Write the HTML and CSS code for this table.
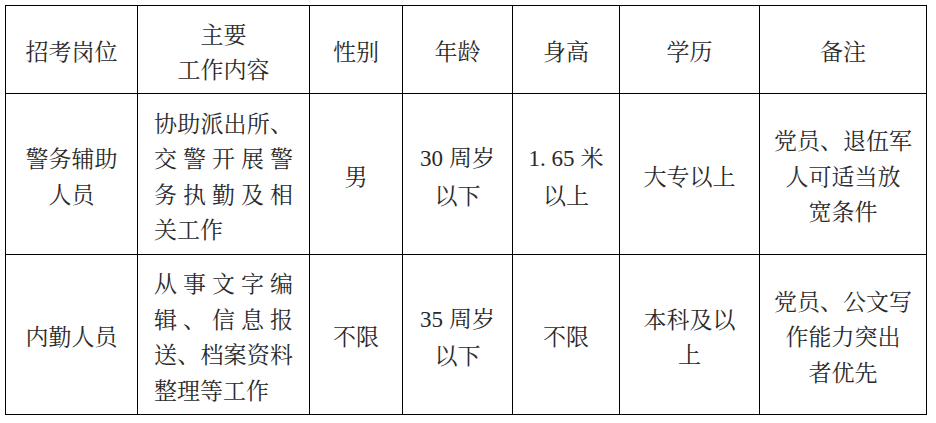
FILE: index.html
```html
<!DOCTYPE html>
<html lang="zh-CN">
<head>
<meta charset="utf-8">
<title>招考岗位</title>
<link rel="stylesheet" href="styles.css">
</head>
<body>
<div class="page">
<table class="jobs">
  <colgroup>
    <col class="c1"><col class="c2"><col class="c3"><col class="c4"><col class="c5"><col class="c6"><col class="c7">
  </colgroup>
  <tr class="head">
    <td>招考岗位</td>
    <td>主要<br>工作内容</td>
    <td>性别</td>
    <td>年龄</td>
    <td>身高</td>
    <td>学历</td>
    <td>备注</td>
  </tr>
  <tr class="r1">
    <td>警务辅助<br>人员</td>
    <td class="just">
      <span class="ln">协助派出所、</span>
      <span class="ln">交警开展警</span>
      <span class="ln">务执勤及相</span>
      <span class="ln last">关工作</span>
    </td>
    <td>男</td>
    <td><span class="num">30</span> 周岁<br>以下</td>
    <td><span class="num">1. 65</span> 米<br>以上</td>
    <td>大专以上</td>
    <td>党员、退伍军<br>人可适当放<br>宽条件</td>
  </tr>
  <tr class="r2">
    <td>内勤人员</td>
    <td class="just">
      <span class="ln">从事文字编</span>
      <span class="ln">辑、信息报</span>
      <span class="ln">送、档案资料</span>
      <span class="ln last">整理等工作</span>
    </td>
    <td>不限</td>
    <td><span class="num">35</span> 周岁<br>以下</td>
    <td>不限</td>
    <td>本科及以<br>上</td>
    <td>党员、公文写<br>作能力突出<br>者优先</td>
  </tr>
</table>
</div>
</body>
</html>
```
FILE: styles.css
```css
html, body {
  margin: 0;
  padding: 0;
  background: #ffffff;
}
.page {
  padding: 5px 0 0 5px;
}
.jobs {
  border-collapse: collapse;
  table-layout: fixed;
  width: 921px;
  font-family: "Noto Serif CJK SC", "Noto Sans CJK SC", sans-serif;
  font-size: 23px;
  line-height: 35.5px;
  color: #2a2a2a;
}
.jobs td {
  border: 1px solid #000;
  text-align: center;
  vertical-align: middle;
  padding: 3px 10px 0 10px;
}
.c1 { width: 132px; }
.c2 { width: 172px; }
.c3 { width: 93px; }
.c4 { width: 110px; }
.c5 { width: 107px; }
.c6 { width: 140px; }
.c7 { width: 167px; }
.head { height: 88px; }
.r1 { height: 161px; }
.r2 { height: 160px; }
.jobs td.just {
  padding-left: 16px;
  padding-right: 16px;
}
.ln {
  display: block;
  white-space: nowrap;
  text-align: justify;
  text-align-last: justify;
}
.ln.last {
  text-align: left;
  text-align-last: left;
}
.num {
  font-family: "Liberation Serif", "Noto Serif CJK SC", serif;
}
```
